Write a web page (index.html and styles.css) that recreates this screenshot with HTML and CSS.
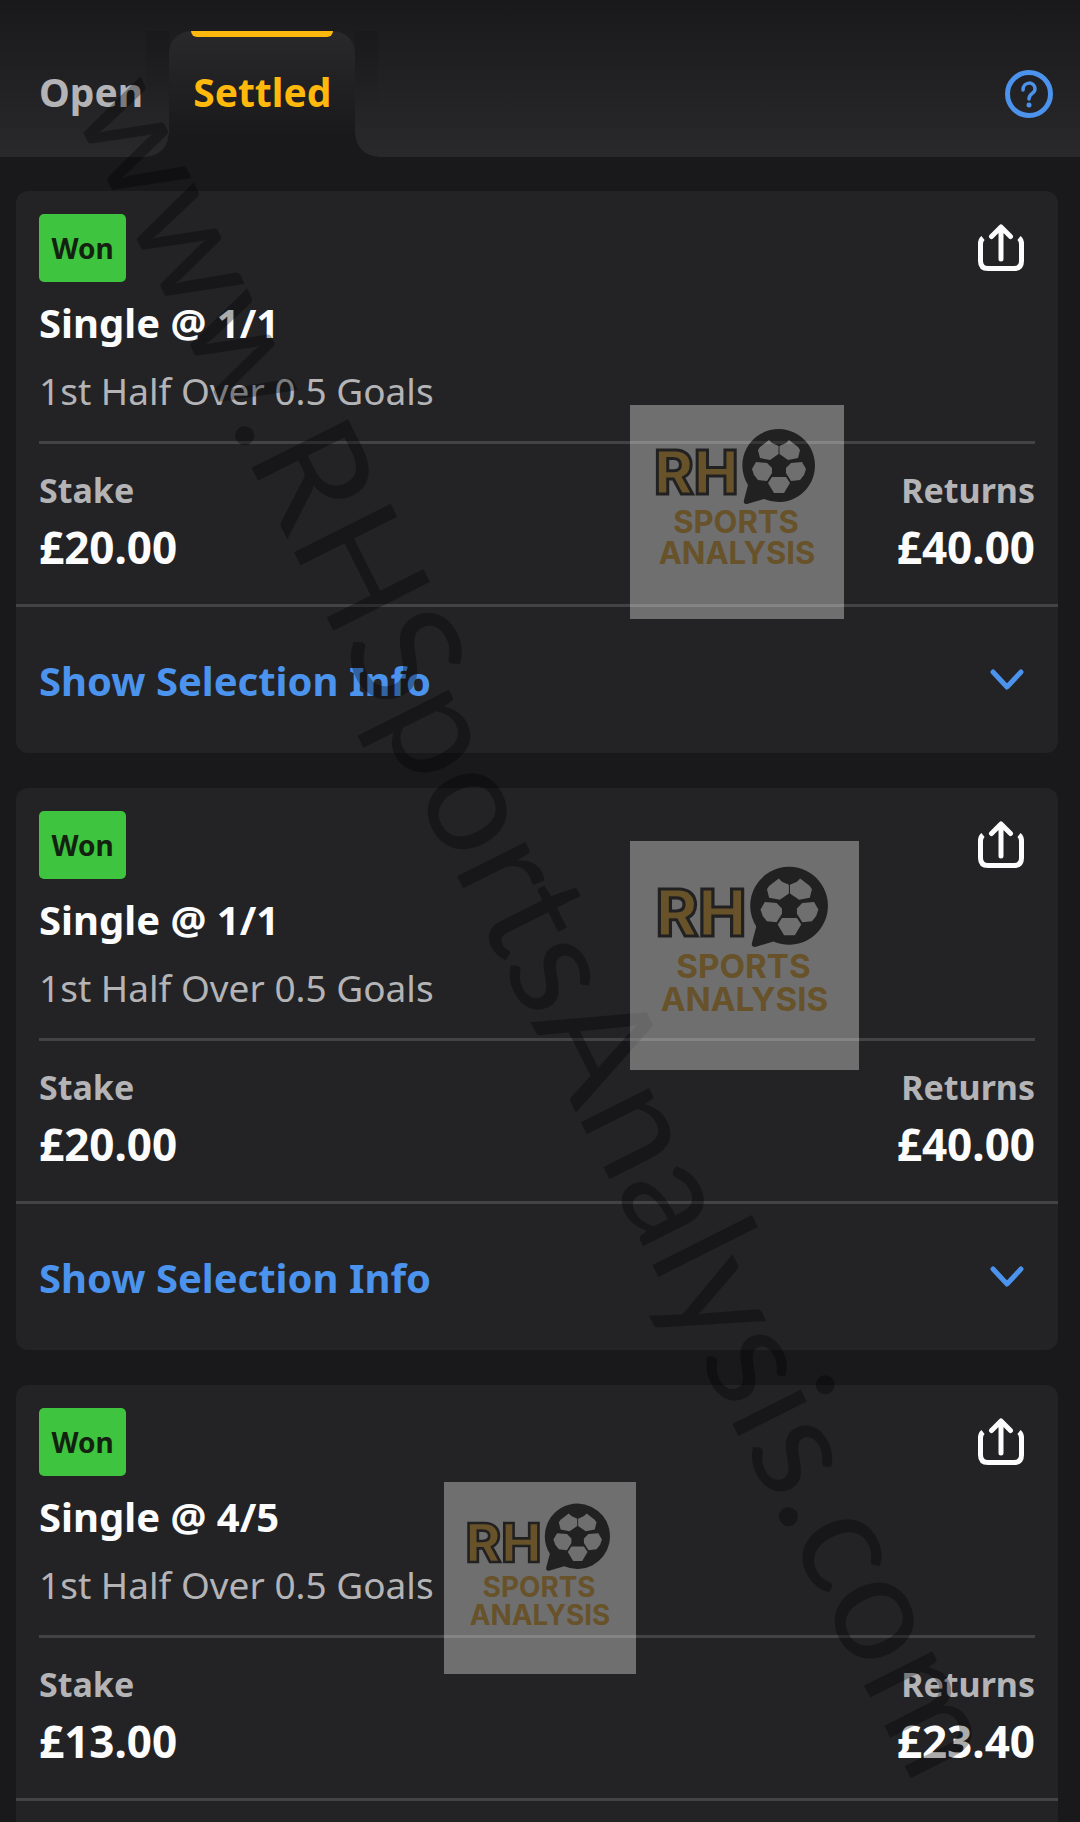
FILE: index.html
```html
<!DOCTYPE html>
<html lang="en">
<head>
  <meta charset="UTF-8">
  <meta name="viewport" content="width=device-width, initial-scale=1.0">
  <title>My Bets</title>
  <link rel="stylesheet" href="styles.css">
</head>
<body>
  <!-- Shared icons -->
  <svg class="defs" aria-hidden="true">
    <symbol id="share" viewBox="0 0 46 48">
      <path d="M5 14Q2.500 16 2.500 20V37Q2.500 44.500 10 44.500H36Q43.500 44.500 43.500 37V20Q43.500 16 41 14" fill="none" stroke="currentColor" stroke-width="5"/>
      <path d="M23 35V4M13.500 12.500L23 3L32.500 12.500" fill="none" stroke="currentColor" stroke-width="5" stroke-linecap="round" stroke-linejoin="round"/>
    </symbol>
    <symbol id="chevron" viewBox="0 0 34 22">
      <path d="M3 3L17 18L31 3" fill="none" stroke="currentColor" stroke-width="5" stroke-linecap="round" stroke-linejoin="round"/>
    </symbol>
    <symbol id="logo" viewBox="0 0 214 214">
      <rect width="214" height="214" fill="#fcfcfa"/>
      <text x="24" y="89" class="logo-rh">RH</text>
      <path d="M149 24A36.500 36.500 0 1 1 134 94L117 99Q113 99 114 95L118 80A36.500 36.500 0 0 1 149 24Z" fill="#201e1c"/>
      <g fill="#fcfcfa">
        <path d="M130 42L139 35L142 38L148.500 41V49L140 55L130 53L128 45Z"/>
        <path d="M168 42L159 35L156 38L149.500 41V49L158 55L168 53L170 45Z"/>
        <path d="M126 57L137 58L142 63L142 68L137 76L128 75L124 70L122 64Z"/>
        <path d="M172 57L161 58L156 63L156 68L161 76L170 75L174 70L176 64Z"/>
        <path d="M142 72H156L160 78L154 88H144L138 78Z"/>
      </g>
      <text x="106" y="128" class="logo-word">SPORTS</text>
      <text x="107" y="159" class="logo-word">ANALYSIS</text>
    </symbol>
  </svg>

  <div class="page">
    <header class="header">
      <nav class="tabs">
        <button class="tab">Open</button>
        <button class="tab active">Settled<span class="marker"></span></button>
      </nav>
      <button class="help" aria-label="Help">
        <svg viewBox="0 0 48 48" fill="none" stroke="currentColor">
          <circle cx="24" cy="24" r="21.500" stroke-width="5"/>
          <path d="M18 20C18 11 30 11 30 19C30 24 24 23 24 29" stroke-width="3.500" stroke-linecap="round"/>
          <circle cx="24" cy="35" r="2.500" fill="currentColor" stroke="none"/>
        </svg>
      </button>
    </header>

    <main class="bets">
      <article class="bet">
        <div class="bet-main">
          <div class="bet-top">
            <span class="badge">Won</span>
            <button class="share" aria-label="Share"><svg><use href="#share"/></svg></button>
          </div>
          <h2>Single @ 1/1</h2>
          <p class="market">1st Half Over 0.5 Goals</p>
          <dl class="money">
            <div><dt>Stake</dt><dd>£20.00</dd></div>
            <div class="returns"><dt>Returns</dt><dd>£40.00</dd></div>
          </dl>
        </div>
        <button class="more">Show Selection Info <svg><use href="#chevron"/></svg></button>
        <svg class="stamp stamp-one"><use href="#logo"/></svg>
      </article>

      <article class="bet">
        <div class="bet-main">
          <div class="bet-top">
            <span class="badge">Won</span>
            <button class="share" aria-label="Share"><svg><use href="#share"/></svg></button>
          </div>
          <h2>Single @ 1/1</h2>
          <p class="market">1st Half Over 0.5 Goals</p>
          <dl class="money">
            <div><dt>Stake</dt><dd>£20.00</dd></div>
            <div class="returns"><dt>Returns</dt><dd>£40.00</dd></div>
          </dl>
        </div>
        <button class="more">Show Selection Info <svg><use href="#chevron"/></svg></button>
        <svg class="stamp stamp-two"><use href="#logo"/></svg>
      </article>

      <article class="bet">
        <div class="bet-main">
          <div class="bet-top">
            <span class="badge">Won</span>
            <button class="share" aria-label="Share"><svg><use href="#share"/></svg></button>
          </div>
          <h2>Single @ 4/5</h2>
          <p class="market">1st Half Over 0.5 Goals</p>
          <dl class="money">
            <div><dt>Stake</dt><dd>£13.00</dd></div>
            <div class="returns"><dt>Returns</dt><dd>£23.40</dd></div>
          </dl>
        </div>
        <button class="more">Show Selection Info <svg><use href="#chevron"/></svg></button>
        <svg class="stamp stamp-three"><use href="#logo"/></svg>
      </article>
    </main>

    <div class="watermark">www.RHSportsAnalysis.com</div>
  </div>
</body>
</html>
```
FILE: styles.css
```css
* {
  margin: 0;
  padding: 0;
  box-sizing: border-box;
}

body {
  background: #19191b;
  color: #fcfcfc;
  font-family: "Noto Sans", "Open Sans", sans-serif;
}

button {
  background: none;
  border: none;
  color: inherit;
  font: inherit;
  cursor: pointer;
}

svg {
  display: block;
}

.defs {
  position: absolute;
  width: 0;
  height: 0;
}

.page {
  position: relative;
  height: 100vh;
  overflow: hidden auto;
  scrollbar-width: none;
}

/* Header and tabs */
.header {
  display: flex;
  justify-content: space-between;
  align-items: flex-end;
  height: 157px;
  padding: 0 27px 0 15px;
  background: linear-gradient(#19191b, #29292c);
}

.tabs {
  display: flex;
  gap: 2px;
}

.tab {
  position: relative;
  height: 126px;
  padding: 0 24px 4px;
  color: #b4b4b7;
  font-size: 39px;
  font-weight: 700;
  line-height: 52px;
}

.tab.active {
  color: #ffb80c;
  background: linear-gradient(#29292c, #19191b 85%);
  border-radius: 22px 22px 0 0;
}

/* yellow marker along the top edge */
.marker {
  position: absolute;
  top: 0;
  left: 22px;
  right: 22px;
  height: 6px;
  background: #ffb80c;
  border-radius: 0 0 6px 6px;
}

/* curved feet on both sides of the active tab */
.tab.active::before,
.tab.active::after {
  content: "";
  position: absolute;
  top: 0;
  bottom: 0;
  width: 23px;
}

.tab.active::before {
  right: 100%;
  background:
    radial-gradient(circle at 0 0, transparent 22px, #19191b 23px) bottom / 23px 23px no-repeat,
    linear-gradient(rgba(0, 0, 0, 0.12), transparent 70%);
}

.tab.active::after {
  left: 100%;
  background:
    radial-gradient(circle at 100% 0, transparent 22px, #19191b 23px) bottom / 23px 23px no-repeat,
    linear-gradient(rgba(0, 0, 0, 0.12), transparent 70%);
}

.help {
  margin-bottom: 39px;
  color: #4b93ec;
}

.help svg {
  width: 48px;
  height: 48px;
}

/* Bet cards */
.bets {
  display: flex;
  flex-direction: column;
  gap: 35px;
  padding: 34px 22px 34px 16px;
}

.bet {
  position: relative;
  background: #232325;
  border-radius: 12px;
}

.bet-main {
  padding: 23px 23px 0;
}

.bet-top {
  display: flex;
  justify-content: space-between;
  align-items: center;
}

.badge {
  width: 87px;
  height: 68px;
  background: #3fc440;
  border-radius: 5px;
  color: #13210f;
  font-size: 28px;
  font-weight: 700;
  line-height: 68px;
  text-align: center;
}

.share {
  margin-right: 11px;
}

.share svg {
  width: 46px;
  height: 48px;
}

.bet h2 {
  margin-top: 13px;
  font-size: 40px;
  font-weight: 700;
  line-height: 56px;
}

.market {
  margin-top: 12px;
  padding-bottom: 22px;
  border-bottom: 3px solid #434346;
  color: #b4b4b7;
  font-size: 37px;
  line-height: 56px;
}

.money {
  display: flex;
  justify-content: space-between;
  height: 160px;
  padding-top: 20px;
}

.money dt {
  color: #b4b4b7;
  font-size: 34px;
  font-weight: 700;
  line-height: 52px;
}

.money dd {
  font-size: 44px;
  font-weight: 700;
  line-height: 62px;
}

.returns {
  text-align: right;
}

.more {
  display: flex;
  justify-content: space-between;
  align-items: center;
  width: 100%;
  height: 149px;
  padding: 0 34px 0 23px;
  border-top: 3px solid #434346;
  color: #4b93ec;
  font-size: 40px;
  font-weight: 700;
}

.more svg {
  width: 34px;
  height: 22px;
}

/* Logo stamps lying over the cards */
.stamp {
  position: absolute;
  z-index: 3;
  opacity: 0.35;
  pointer-events: none;
}

.stamp-one {
  top: 214px;
  left: 614px;
  width: 214px;
  height: 214px;
}

.stamp-two {
  top: 53px;
  left: 614px;
  width: 229px;
  height: 229px;
}

.stamp-three {
  top: 97px;
  left: 428px;
  width: 192px;
  height: 192px;
}

.logo-rh {
  font: 800 60px Inter, sans-serif;
  fill: #e5a933;
  stroke: #201e1c;
  stroke-width: 3px;
}

.logo-word {
  font: 700 31px Inter, sans-serif;
  fill: #e5a933;
  text-anchor: middle;
}

.watermark {
  position: absolute;
  top: -27px;
  left: 70px;
  z-index: 2;
  color: rgba(0, 0, 0, 0.32);
  font-family: Lato, sans-serif;
  font-size: 151px;
  line-height: 153px;
  white-space: nowrap;
  transform: rotate(63.3deg);
  transform-origin: 0 136px;
  pointer-events: none;
}
```
